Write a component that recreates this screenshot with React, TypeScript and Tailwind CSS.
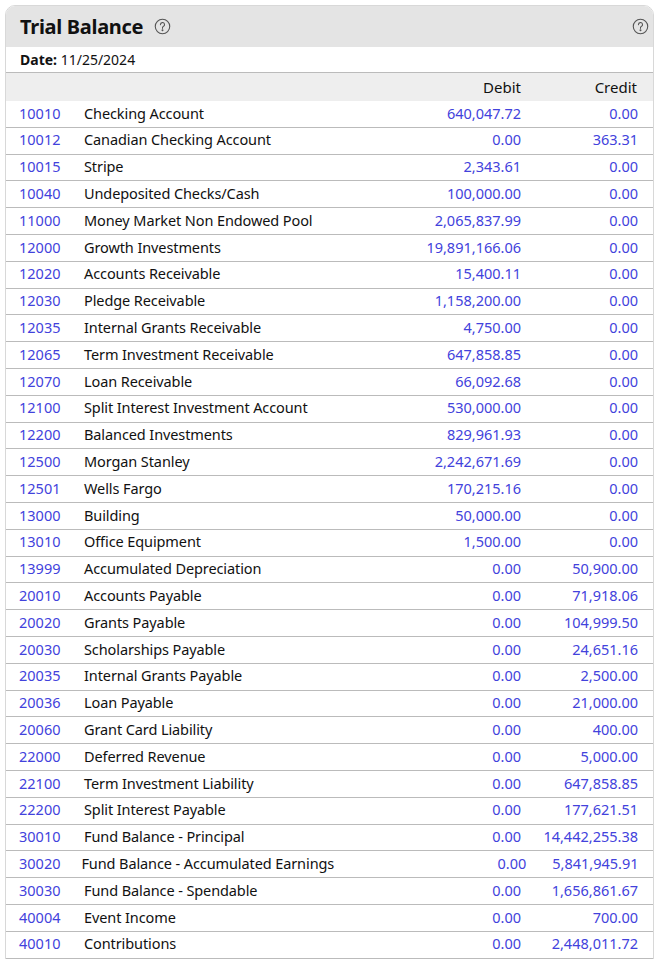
const rows: [string, string, string, string][] = [
["10010","Checking Account","640,047.72","0.00"],
["10012","Canadian Checking Account","0.00","363.31"],
["10015","Stripe","2,343.61","0.00"],
["10040","Undeposited Checks/Cash","100,000.00","0.00"],
["11000","Money Market Non Endowed Pool","2,065,837.99","0.00"],
["12000","Growth Investments","19,891,166.06","0.00"],
["12020","Accounts Receivable","15,400.11","0.00"],
["12030","Pledge Receivable","1,158,200.00","0.00"],
["12035","Internal Grants Receivable","4,750.00","0.00"],
["12065","Term Investment Receivable","647,858.85","0.00"],
["12070","Loan Receivable","66,092.68","0.00"],
["12100","Split Interest Investment Account","530,000.00","0.00"],
["12200","Balanced Investments","829,961.93","0.00"],
["12500","Morgan Stanley","2,242,671.69","0.00"],
["12501","Wells Fargo","170,215.16","0.00"],
["13000","Building","50,000.00","0.00"],
["13010","Office Equipment","1,500.00","0.00"],
["13999","Accumulated Depreciation","0.00","50,900.00"],
["20010","Accounts Payable","0.00","71,918.06"],
["20020","Grants Payable","0.00","104,999.50"],
["20030","Scholarships Payable","0.00","24,651.16"],
["20035","Internal Grants Payable","0.00","2,500.00"],
["20036","Loan Payable","0.00","21,000.00"],
["20060","Grant Card Liability","0.00","400.00"],
["22000","Deferred Revenue","0.00","5,000.00"],
["22100","Term Investment Liability","0.00","647,858.85"],
["22200","Split Interest Payable","0.00","177,621.51"],
["30010","Fund Balance - Principal","0.00","14,442,255.38"],
["30020","Fund Balance - Accumulated Earnings","0.00","5,841,945.91"],
["30030","Fund Balance - Spendable","0.00","1,656,861.67"],
["40004","Event Income","0.00","700.00"],
["40010","Contributions","0.00","2,448,011.72"],
];

function Help({ cls }: { cls: string }) {
  return (
    <svg viewBox="0 0 20 20" className={cls} fill="none" stroke="#555" strokeWidth="1.3">
      <circle cx="10" cy="10" r="8.5" />
      <path d="M7.6 7.8a2.4 2.4 0 1 1 3.3 2.2c-.6.3-.9.8-.9 1.4v.8" strokeLinecap="round" />
      <circle cx="10" cy="14.4" r=".5" fill="#555" />
    </svg>
  );
}

export default function App() {
  return (
    <div className="bg-white h-[959px] overflow-hidden pt-[5px] pl-[5px] pr-px text-[15px] text-[#111]" style={{ fontFamily: '"Noto Sans", "Open Sans", sans-serif' }}>
      <div className="border border-[#d8d8d8] rounded-t-[10px] overflow-hidden">
        <div className="bg-[#e4e4e4] h-[41px] flex items-center pl-[14px] pr-[4px]">
          <span className="font-bold text-[20px] tracking-[-0.3px]">Trial Balance</span>
          <Help cls="w-[17px] h-[17px] ml-[11px]" />
          <div className="flex-1" />
          <Help cls="w-[17px] h-[17px]" />
        </div>
        <div className="h-[26px] flex items-center pl-[14px] text-[14px] border-b border-[#bbb]">
          <b>Date:</b>&nbsp;11/25/2024
        </div>
        <div className="h-[28px] bg-[#eeeeee] flex items-center">
          <span className="ml-auto w-[200px] text-right">Debit</span>
          <span className="w-[117px] text-right pr-[1px]">Credit</span>
          <span className="w-[15px]" />
        </div>
        {rows.map(r => (
          <div key={r[0]} className="h-[26.8px] flex items-center border-b border-[#bbb] leading-none whitespace-nowrap pb-[2px]">
            <span className="w-[78px] pl-[13px] text-[#4242dc] text-[14.5px]">{r[0]}</span>
            <span className="flex-1 text-[#111] text-[14.5px] tracking-[-0.1px]">{r[1]}</span>
            <span className="w-[200px] text-right text-[#4242dc] text-[14.5px]">{r[2]}</span>
            <span className="w-[117px] text-right text-[#4242dc] text-[14.5px]">{r[3]}</span>
            <span className="w-[15px]" />
          </div>
        ))}
      </div>
    </div>
  );
}
